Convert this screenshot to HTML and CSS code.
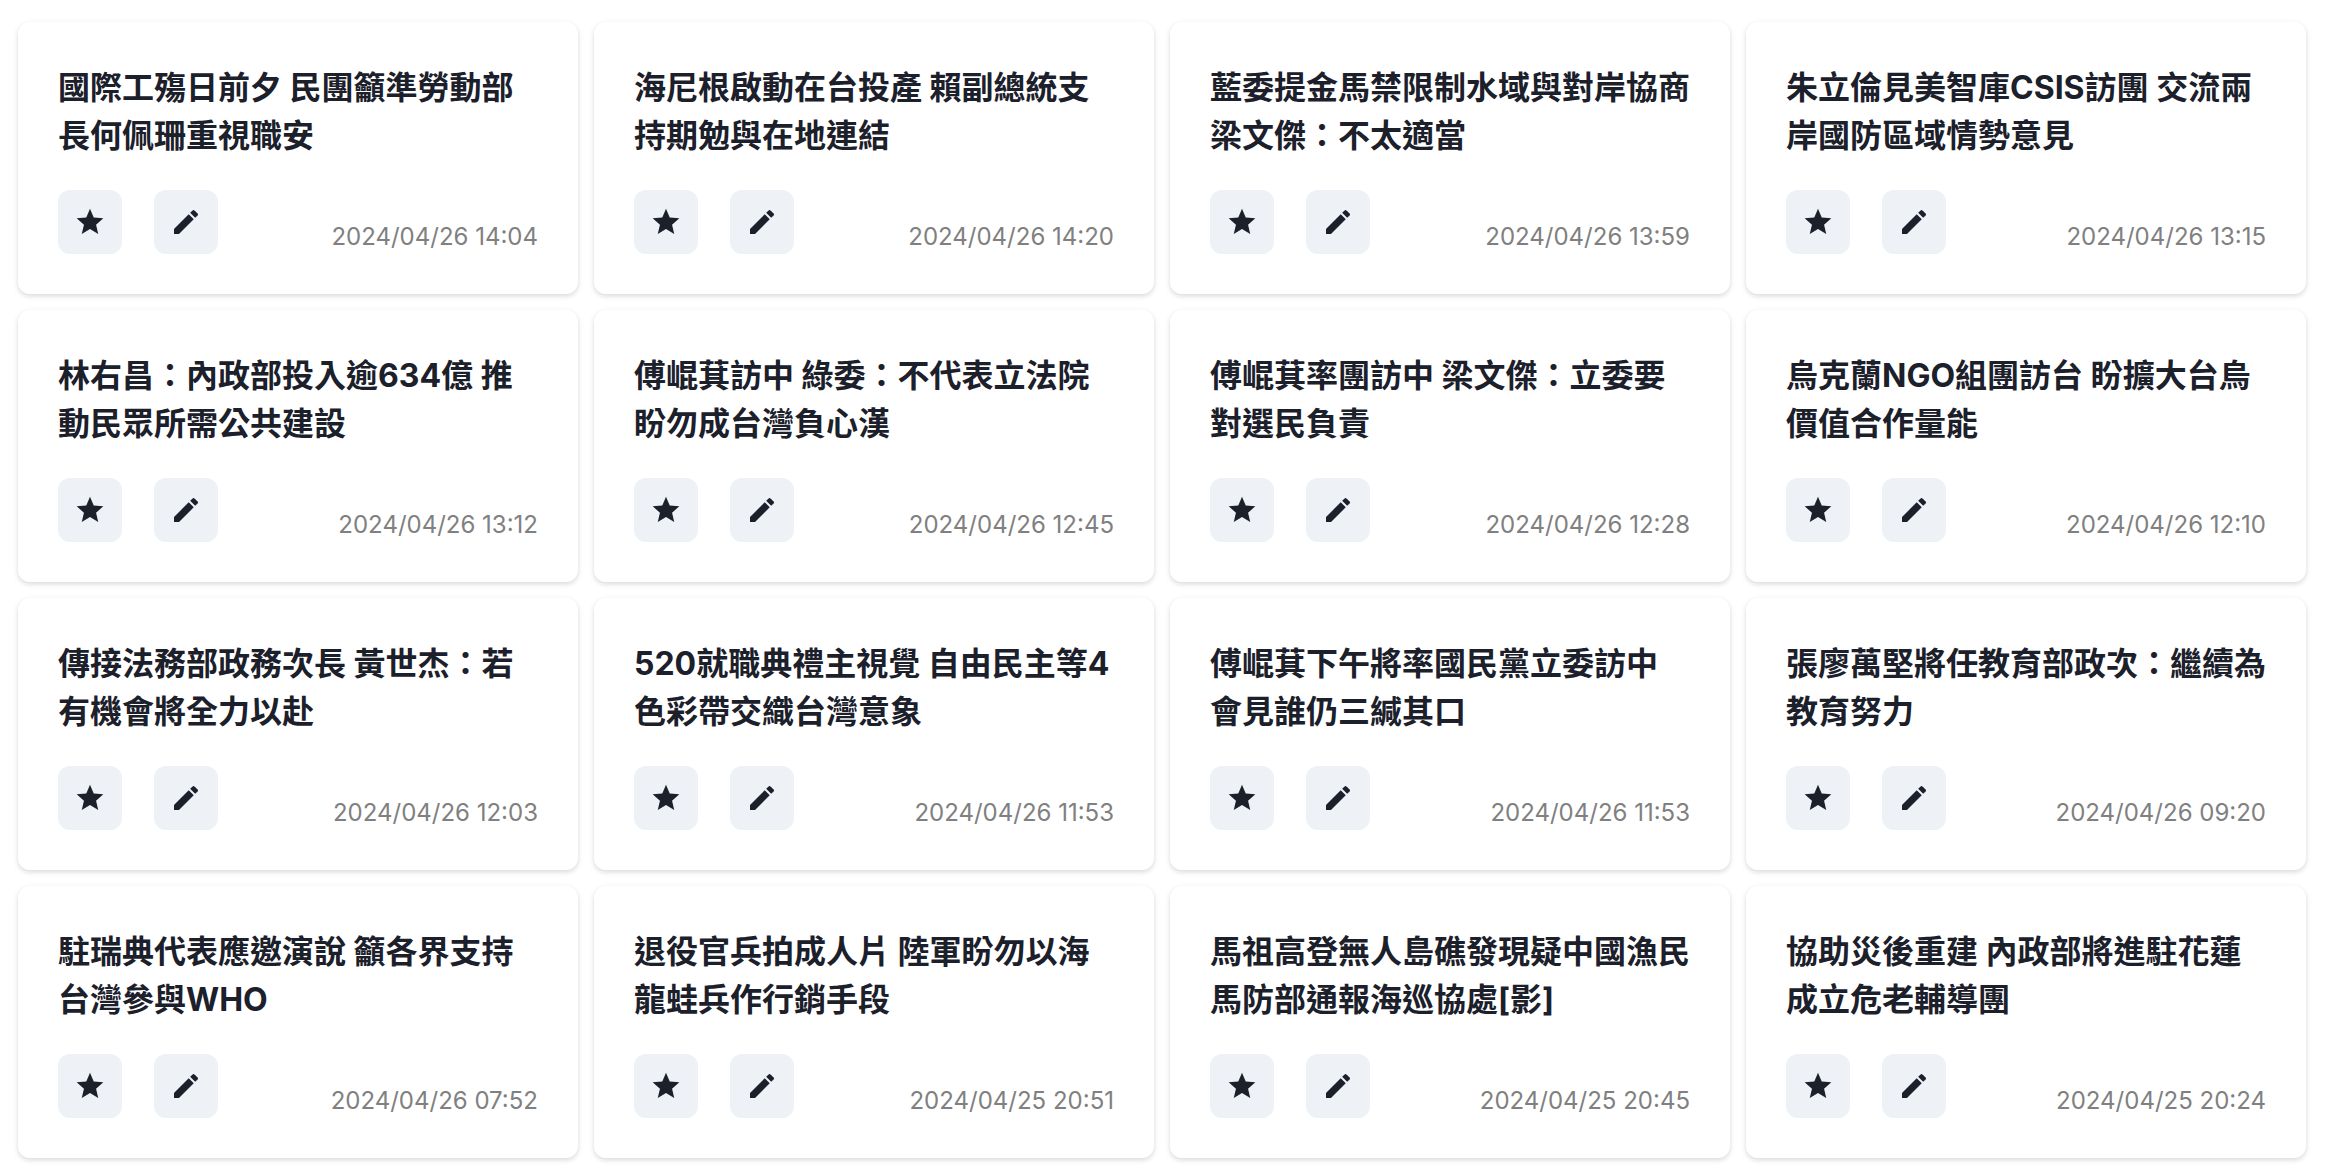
FILE: index.html
```html
<!DOCTYPE html>
<html lang="zh-Hant">
<head>
<meta charset="utf-8">
<meta name="viewport" content="width=device-width, initial-scale=1">
<title>新聞列表</title>
<link rel="stylesheet" href="styles.css">
</head>
<body>
<svg class="sprite" aria-hidden="true">
  <symbol id="star" viewBox="0 0 24 24"><path d="M12 17.27L18.18 21l-1.64-7.03L22 9.24l-7.19-.61L12 2 9.19 8.63 2 9.24l5.46 4.73L5.82 21z"/></symbol>
  <symbol id="edit" viewBox="0 0 24 24"><path d="M3 17.25V21h3.75L17.81 9.94l-3.75-3.75L3 17.25zM20.71 7.04a.996.996 0 0 0 0-1.41l-2.34-2.34a.996.996 0 0 0-1.41 0l-1.83 1.83 3.75 3.75 1.83-1.83z"/></symbol>
</svg>
<main class="news-grid">
  <article class="card">
    <h2 class="title">國際工殤日前夕 民團籲準勞動部長何佩珊重視職安</h2>
    <div class="footer">
      <button class="icon-button" type="button" aria-label="收藏"><svg class="icon"><use href="#star"/></svg></button>
      <button class="icon-button" type="button" aria-label="編輯"><svg class="icon"><use href="#edit"/></svg></button>
      <time class="date">2024/04/26 14:04</time>
    </div>
  </article>
  <article class="card">
    <h2 class="title">海尼根啟動在台投產 賴副總統支持期勉與在地連結</h2>
    <div class="footer">
      <button class="icon-button" type="button" aria-label="收藏"><svg class="icon"><use href="#star"/></svg></button>
      <button class="icon-button" type="button" aria-label="編輯"><svg class="icon"><use href="#edit"/></svg></button>
      <time class="date">2024/04/26 14:20</time>
    </div>
  </article>
  <article class="card">
    <h2 class="title">藍委提金馬禁限制水域與對岸協商 梁文傑：不太適當</h2>
    <div class="footer">
      <button class="icon-button" type="button" aria-label="收藏"><svg class="icon"><use href="#star"/></svg></button>
      <button class="icon-button" type="button" aria-label="編輯"><svg class="icon"><use href="#edit"/></svg></button>
      <time class="date">2024/04/26 13:59</time>
    </div>
  </article>
  <article class="card">
    <h2 class="title">朱立倫見美智庫CSIS訪團 交流兩岸國防區域情勢意見</h2>
    <div class="footer">
      <button class="icon-button" type="button" aria-label="收藏"><svg class="icon"><use href="#star"/></svg></button>
      <button class="icon-button" type="button" aria-label="編輯"><svg class="icon"><use href="#edit"/></svg></button>
      <time class="date">2024/04/26 13:15</time>
    </div>
  </article>
  <article class="card">
    <h2 class="title">林右昌：內政部投入逾634億 推動民眾所需公共建設</h2>
    <div class="footer">
      <button class="icon-button" type="button" aria-label="收藏"><svg class="icon"><use href="#star"/></svg></button>
      <button class="icon-button" type="button" aria-label="編輯"><svg class="icon"><use href="#edit"/></svg></button>
      <time class="date">2024/04/26 13:12</time>
    </div>
  </article>
  <article class="card">
    <h2 class="title">傅崐萁訪中 綠委：不代表立法院盼勿成台灣負心漢</h2>
    <div class="footer">
      <button class="icon-button" type="button" aria-label="收藏"><svg class="icon"><use href="#star"/></svg></button>
      <button class="icon-button" type="button" aria-label="編輯"><svg class="icon"><use href="#edit"/></svg></button>
      <time class="date">2024/04/26 12:45</time>
    </div>
  </article>
  <article class="card">
    <h2 class="title">傅崐萁率團訪中 梁文傑：立委要對選民負責</h2>
    <div class="footer">
      <button class="icon-button" type="button" aria-label="收藏"><svg class="icon"><use href="#star"/></svg></button>
      <button class="icon-button" type="button" aria-label="編輯"><svg class="icon"><use href="#edit"/></svg></button>
      <time class="date">2024/04/26 12:28</time>
    </div>
  </article>
  <article class="card">
    <h2 class="title">烏克蘭NGO組團訪台 盼擴大台烏價值合作量能</h2>
    <div class="footer">
      <button class="icon-button" type="button" aria-label="收藏"><svg class="icon"><use href="#star"/></svg></button>
      <button class="icon-button" type="button" aria-label="編輯"><svg class="icon"><use href="#edit"/></svg></button>
      <time class="date">2024/04/26 12:10</time>
    </div>
  </article>
  <article class="card">
    <h2 class="title">傳接法務部政務次長 黃世杰：若有機會將全力以赴</h2>
    <div class="footer">
      <button class="icon-button" type="button" aria-label="收藏"><svg class="icon"><use href="#star"/></svg></button>
      <button class="icon-button" type="button" aria-label="編輯"><svg class="icon"><use href="#edit"/></svg></button>
      <time class="date">2024/04/26 12:03</time>
    </div>
  </article>
  <article class="card">
    <h2 class="title">520就職典禮主視覺 自由民主等4色彩帶交織台灣意象</h2>
    <div class="footer">
      <button class="icon-button" type="button" aria-label="收藏"><svg class="icon"><use href="#star"/></svg></button>
      <button class="icon-button" type="button" aria-label="編輯"><svg class="icon"><use href="#edit"/></svg></button>
      <time class="date">2024/04/26 11:53</time>
    </div>
  </article>
  <article class="card">
    <h2 class="title">傅崐萁下午將率國民黨立委訪中 會見誰仍三緘其口</h2>
    <div class="footer">
      <button class="icon-button" type="button" aria-label="收藏"><svg class="icon"><use href="#star"/></svg></button>
      <button class="icon-button" type="button" aria-label="編輯"><svg class="icon"><use href="#edit"/></svg></button>
      <time class="date">2024/04/26 11:53</time>
    </div>
  </article>
  <article class="card">
    <h2 class="title">張廖萬堅將任教育部政次：繼續為教育努力</h2>
    <div class="footer">
      <button class="icon-button" type="button" aria-label="收藏"><svg class="icon"><use href="#star"/></svg></button>
      <button class="icon-button" type="button" aria-label="編輯"><svg class="icon"><use href="#edit"/></svg></button>
      <time class="date">2024/04/26 09:20</time>
    </div>
  </article>
  <article class="card">
    <h2 class="title">駐瑞典代表應邀演說 籲各界支持台灣參與WHO</h2>
    <div class="footer">
      <button class="icon-button" type="button" aria-label="收藏"><svg class="icon"><use href="#star"/></svg></button>
      <button class="icon-button" type="button" aria-label="編輯"><svg class="icon"><use href="#edit"/></svg></button>
      <time class="date">2024/04/26 07:52</time>
    </div>
  </article>
  <article class="card">
    <h2 class="title">退役官兵拍成人片 陸軍盼勿以海龍蛙兵作行銷手段</h2>
    <div class="footer">
      <button class="icon-button" type="button" aria-label="收藏"><svg class="icon"><use href="#star"/></svg></button>
      <button class="icon-button" type="button" aria-label="編輯"><svg class="icon"><use href="#edit"/></svg></button>
      <time class="date">2024/04/25 20:51</time>
    </div>
  </article>
  <article class="card">
    <h2 class="title">馬祖高登無人島礁發現疑中國漁民 馬防部通報海巡協處[影]</h2>
    <div class="footer">
      <button class="icon-button" type="button" aria-label="收藏"><svg class="icon"><use href="#star"/></svg></button>
      <button class="icon-button" type="button" aria-label="編輯"><svg class="icon"><use href="#edit"/></svg></button>
      <time class="date">2024/04/25 20:45</time>
    </div>
  </article>
  <article class="card">
    <h2 class="title">協助災後重建 內政部將進駐花蓮成立危老輔導團</h2>
    <div class="footer">
      <button class="icon-button" type="button" aria-label="收藏"><svg class="icon"><use href="#star"/></svg></button>
      <button class="icon-button" type="button" aria-label="編輯"><svg class="icon"><use href="#edit"/></svg></button>
      <time class="date">2024/04/25 20:24</time>
    </div>
  </article>
</main>
</body>
</html>
```
FILE: styles.css
```css
*,
*::before,
*::after {
  box-sizing: border-box;
}

body {
  margin: 0;
  background: #fff;
  color: #1b202b;
  font-family: Inter, "Noto Sans CJK TC", sans-serif;
}

.sprite {
  display: none;
}

.news-grid {
  display: grid;
  grid-template-columns: repeat(auto-fill, minmax(480px, 1fr));
  gap: 16px;
  padding: 22px 24px 14px 18px;
}

.card {
  display: flex;
  flex-direction: column;
  justify-content: space-between;
  gap: 30px;
  padding: 42px 40px 40px;
  border-radius: 12px;
  background: #fff;
  box-shadow: 0 2px 6px rgba(0, 0, 0, 0.1), 0 2px 4px rgba(0, 0, 0, 0.06);
}

.title {
  margin: 0;
  font-size: 32px;
  font-weight: 700;
  line-height: 48px;
}

.footer {
  display: flex;
  align-items: flex-end;
  gap: 32px;
}

.icon-button {
  display: flex;
  align-items: center;
  justify-content: center;
  width: 64px;
  height: 64px;
  padding: 0;
  border: 0;
  border-radius: 12px;
  background: #eef1f6;
  color: inherit;
  cursor: pointer;
}

.icon {
  width: 32px;
  height: 32px;
  fill: currentColor;
}

.date {
  margin-left: auto;
  color: #808080;
  font-size: 24px;
  line-height: 34px;
}
```
